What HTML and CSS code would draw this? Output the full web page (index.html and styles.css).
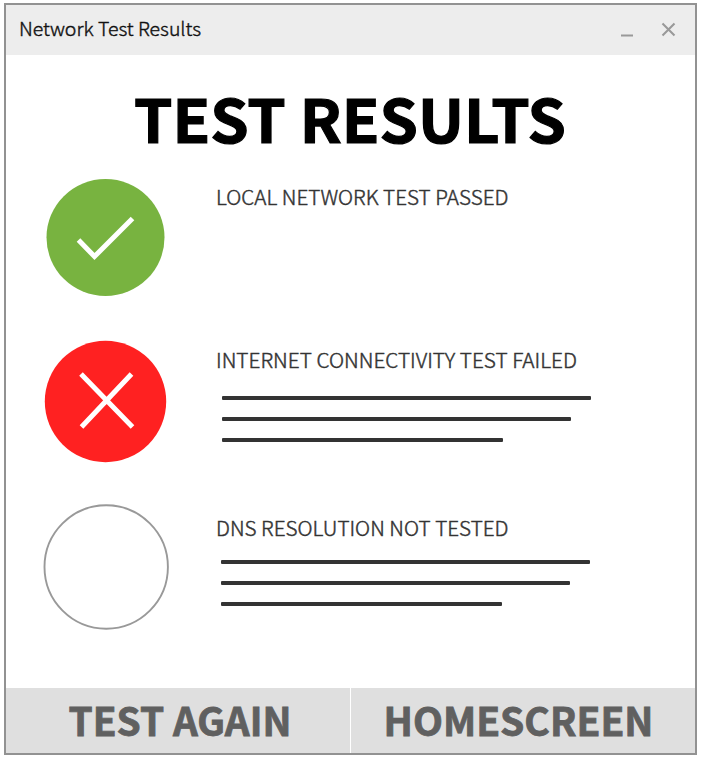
FILE: index.html
```html
<!DOCTYPE html>
<html lang="en">
<head>
<meta charset="utf-8">
<title>Network Test Results</title>
<link rel="stylesheet" href="styles.css">
</head>
<body>
<main class="window">
  <header class="titlebar">
    <span class="caption"><svg class="fit" width="183" height="30"><text x="0" y="20.500" textLength="182" lengthAdjust="spacingAndGlyphs">Network Test Results</text></svg></span>
    <svg class="controls" width="60" height="20" viewBox="0 0 60 20"><path d="M1 15.500h12M42.500 3.500l12 12M54.500 3.500L42.500 15.500"/></svg>
  </header>
  <section class="content">
    <h1><svg class="fit" width="440" height="80"><text x="3" y="62.500" textLength="432" lengthAdjust="spacingAndGlyphs">TEST RESULTS</text></svg></h1>
    <article class="result passed">
      <svg class="status" width="126" height="126" viewBox="0 0 126 126"><ellipse class="green" cx="62.5" cy="62.5" rx="59" ry="58.5"/><path class="mark" d="M35.500 65L51.500 81.500L89.500 43.500"/></svg>
      <div class="detail"><h2><svg class="fit" width="400" height="34"><text x="-1" y="24" textLength="292.500" lengthAdjust="spacingAndGlyphs">LOCAL NETWORK TEST PASSED</text></svg></h2></div>
    </article>
    <article class="result failed">
      <svg class="status" width="126" height="126" viewBox="0 0 126 126"><circle class="red" cx="62.5" cy="62.5" r="60.7"/><path class="mark" d="M38 35L89.500 88M88.500 35L38.500 88"/></svg>
      <div class="detail"><h2><svg class="fit" width="400" height="34"><text x="-1" y="23" textLength="361" lengthAdjust="spacingAndGlyphs">INTERNET CONNECTIVITY TEST FAILED</text></svg></h2><div class="lines"><i></i><i></i><i></i></div></div>
    </article>
    <article class="result untested">
      <svg class="status" width="126" height="126" viewBox="0 0 126 126"><circle class="empty" cx="63.2" cy="64" r="61.7"/></svg>
      <div class="detail"><h2><svg class="fit" width="400" height="34"><text x="-1" y="24" textLength="292.500" lengthAdjust="spacingAndGlyphs">DNS RESOLUTION NOT TESTED</text></svg></h2><div class="lines"><i></i><i></i><i></i></div></div>
    </article>
  </section>
  <footer class="actions">
    <button><svg class="fit" width="344" height="64"><text x="62.500" y="46.700" textLength="223" lengthAdjust="spacingAndGlyphs">TEST AGAIN</text></svg></button>
    <button><svg class="fit" width="344" height="64"><text x="32.500" y="46.700" textLength="270" lengthAdjust="spacingAndGlyphs">HOMESCREEN</text></svg></button>
  </footer>
</main>
</body>
</html>
```
FILE: styles.css
```css
* { box-sizing: border-box; }
body { margin: 0; background: #fff; font-family: "Noto Sans CJK SC", "Noto Sans", sans-serif; }
h1, h2 { margin: 0; }
svg { display: block; flex: none; overflow: visible; }
.fit { fill: currentColor; }
.window { width: 693px; height: 752px; margin: 3px 0 0 4px; border: 2px solid #929292; display: flex; flex-direction: column; background: #fff; }
.titlebar { height: 50px; flex: none; background: #ededed; display: flex; align-items: center; justify-content: space-between; padding: 0 15px 0 13px; font-size: 18.8px; font-weight: 300; color: #111; }
.titlebar .fit { stroke: currentColor; stroke-width: .4px; }
.controls { fill: none; stroke: #999; stroke-width: 2.1; }
.content { height: 633px; flex: none; padding: 25px 0 0 37px; }
h1 { height: 95px; margin-left: 88px; font-size: 60px; font-weight: 700; color: #000; }
h1 .fit { stroke: currentColor; stroke-width: 1.2px; }
.result { display: flex; height: 164px; }
.detail { padding: 6px 0 0 48px; }
h2 { height: 34px; font-size: 20.5px; font-weight: 300; color: #333; }
h2 .fit { stroke: currentColor; stroke-width: .45px; }
.green { fill: #78b340; }
.red { fill: #ff2121; }
.empty { fill: #fff; stroke: #999; stroke-width: 1.9; }
.mark { fill: none; stroke: #fff; stroke-width: 5; }
.lines { display: flex; flex-direction: column; gap: 17px; padding: 17px 0 0 5px; }
.lines i { height: 4px; width: 369px; border-radius: 1px; background: #333; }
.lines i:nth-child(2) { width: 349px; }
.lines i:nth-child(3) { width: 281px; }
.untested .detail { padding-top: 9px; }
.untested .lines { padding: 14px 0 0 4px; }
.actions { flex: 1; display: flex; gap: 1px; background: #fff; }
button { width: 344px; border: 0; padding: 0; background: #dfdfdf; color: #606060; font: 700 38.7px "Noto Sans CJK SC", "Noto Sans", sans-serif; }
button .fit { stroke: currentColor; stroke-width: .8px; }
```
